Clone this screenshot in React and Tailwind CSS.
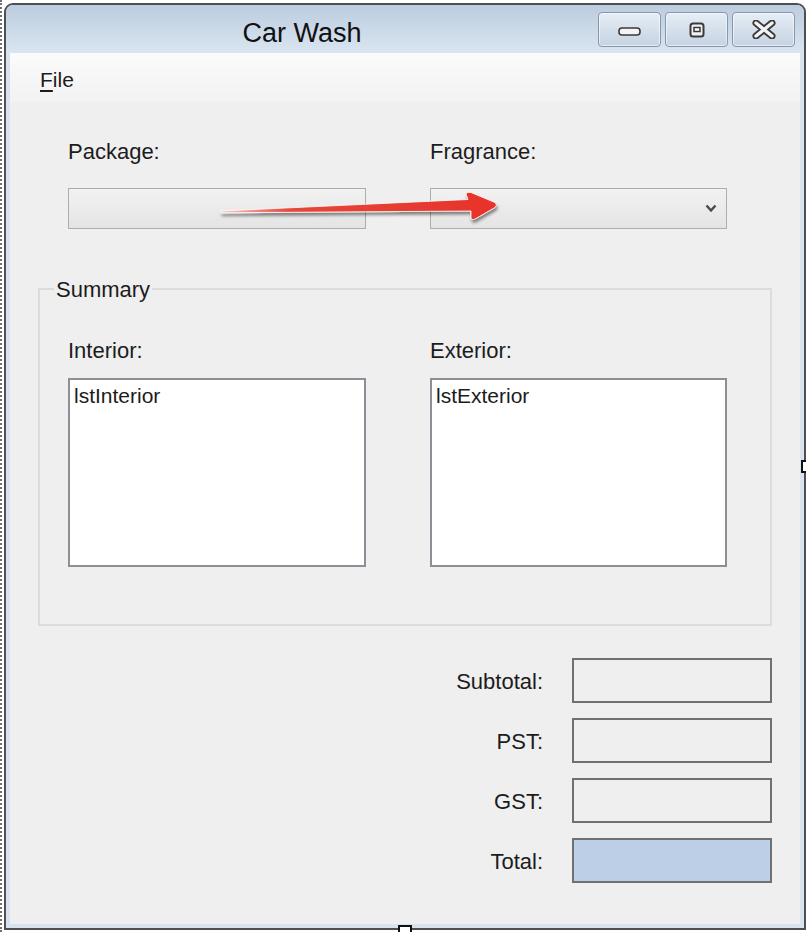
import React from 'react';

const TitleButton = ({ children }) => (
  <div className="w-[63px] h-[35px] rounded-[4px] border border-[#8796aa] bg-gradient-to-b from-[#e6edf5] to-[#c6d3e2] shadow-[inset_0_0_0_1px_rgba(255,255,255,0.55)] flex items-center justify-center">
    {children}
  </div>
);

const TotalRow = ({ label, total }) => (
  <div className="flex items-center gap-[29px]">
    <span className="text-[22px] leading-[26px] pt-[2px]">{label}</span>
    <div
      className={`w-[200px] h-[45px] border-2 border-[#707070] ${
        total ? 'bg-[#bccfe6]' : 'bg-[#efefef]'
      }`}
    />
  </div>
);

export default function App() {
  return (
    <div className="relative w-[806px] h-[932px] overflow-hidden bg-white border-l-2 border-dotted border-[#707070] font-['Liberation_Sans',Arial,sans-serif] text-[#1c1c1c]">
      <div className="ml-[2px] mt-[3px] w-[802px] h-[927px] border-2 border-[#4f4f4f] rounded-t-[9px] bg-[#d8e3ef] flex flex-col overflow-hidden">
        {/* title bar */}
        <div className="h-[48px] flex bg-gradient-to-b from-[#bccddf] to-[#d9e5f1]">
          <div className="flex-1 text-center text-[27px] leading-[32px] pt-[12px] text-[#111]">Car Wash</div>
          <div className="flex gap-[4px] pt-[7px] pr-[9px]">
            <TitleButton>
              <svg width="23" height="9" viewBox="0 0 23 9" className="mt-[4px]">
                <rect x="1" y="1" width="21" height="7" rx="3" fill="#f4f4f4" stroke="#3a3a3a" strokeWidth="1.6" />
              </svg>
            </TitleButton>
            <TitleButton>
              <svg width="16" height="16" viewBox="0 0 16 16">
                <rect x="1.5" y="1.5" width="13" height="13" rx="2.5" fill="#f2f2f2" stroke="#3a3a3a" strokeWidth="2" />
                <rect x="5" y="5.5" width="6" height="4" fill="#fff" stroke="#3a3a3a" strokeWidth="1.5" />
              </svg>
            </TitleButton>
            <TitleButton>
              <svg width="24" height="19" viewBox="0 0 24 19">
                <path d="M4 3 L20 16 M20 3 L4 16" stroke="#3a3a3a" strokeWidth="7" strokeLinecap="round" />
                <path d="M4 3 L20 16 M20 3 L4 16" stroke="#f3f3f3" strokeWidth="3.4" strokeLinecap="round" />
              </svg>
            </TitleButton>
          </div>
        </div>

        {/* menu bar */}
        <div className="mx-[4px] h-[49px] bg-gradient-to-b from-[#fbfbfb] to-[#f2f2f2] pl-[30px] pt-[14px]">
          <span className="text-[21px] leading-[26px]">
            <span className="underline underline-offset-[3px]">F</span>ile
          </span>
        </div>

        {/* client area */}
        <div className="mx-[4px] mb-[4px] flex-1 bg-[#efefef]">
          <div className="flex gap-[64px] pl-[58px] pt-[37px]">
            <div className="w-[298px]">
              <div className="text-[22px] leading-[26px]">Package:</div>
              <div className="mt-[23px] h-[41px] border border-[#adadad] bg-gradient-to-b from-[#f2f2f2] to-[#e4e4e4]" />
            </div>
            <div className="w-[297px]">
              <div className="text-[22px] leading-[26px]">Fragrance:</div>
              <div className="mt-[23px] h-[41px] border border-[#adadad] bg-gradient-to-b from-[#f2f2f2] to-[#e4e4e4] flex items-center justify-end pr-[9px]">
                <svg width="12" height="9" viewBox="0 0 12 9">
                  <path d="M1.5 1.5 L6 6.5 L10.5 1.5" fill="none" stroke="#4a4a4a" strokeWidth="2.4" />
                </svg>
              </div>
            </div>
          </div>

          {/* summary group */}
          <div className="relative mt-[59px] ml-[28px] w-[734px] h-[338px] border-2 border-[#dcdcdc]">
            <span className="absolute -top-[13px] left-[14px] px-[2px] bg-[#efefef] text-[22px] leading-[26px]">Summary</span>
            <div className="flex gap-[64px] pl-[28px] pt-[48px]">
              <div className="w-[298px]">
                <div className="text-[22px] leading-[26px]">Interior:</div>
                <div className="mt-[14px] h-[189px] border-2 border-[#8b9096] bg-white pl-[4px] pt-[4px] text-[21px] leading-[24px]">lstInterior</div>
              </div>
              <div className="w-[297px]">
                <div className="text-[22px] leading-[26px]">Exterior:</div>
                <div className="mt-[14px] h-[189px] border-2 border-[#8b9096] bg-white pl-[4px] pt-[4px] text-[21px] leading-[24px]">lstExterior</div>
              </div>
            </div>
          </div>

          {/* totals */}
          <div className="mt-[32px] ml-[28px] w-[734px] flex flex-col items-end gap-[15px]">
            <TotalRow label="Subtotal:" />
            <TotalRow label="PST:" />
            <TotalRow label="GST:" />
            <TotalRow label="Total:" total />
          </div>
        </div>
      </div>

      {/* designer resize handles */}
      <div className="absolute left-[799px] top-[460px] w-[12px] h-[13px] bg-white border-2 border-[#111]" />
      <div className="absolute left-[396px] top-[925px] w-[14px] h-[12px] bg-white border-2 border-[#111]" />

      {/* annotation arrow */}
      <svg className="absolute inset-0 pointer-events-none" width="806" height="932" viewBox="0 0 806 932">
        <defs>
          <linearGradient id="arrowFill" x1="219" y1="0" x2="494" y2="0" gradientUnits="userSpaceOnUse">
            <stop offset="0" stopColor="#f6c8c2" />
            <stop offset="0.25" stopColor="#e4473b" />
            <stop offset="1" stopColor="#e8322a" />
          </linearGradient>
          <filter id="arrowShadow" x="-10%" y="-50%" width="120%" height="200%">
            <feDropShadow dx="1" dy="3" stdDeviation="1.6" floodColor="#000" floodOpacity="0.45" />
          </filter>
        </defs>
        <path
          d="M219 211 L466 199.5 L464 194 Q465 191.5 469 192.5 L493 202.5 Q496 205 493 207.5 L473 219 Q469.5 220.5 469 217.5 L469 211 L219 212.8 Z"
          fill="url(#arrowFill)"
          stroke="#fff"
          strokeWidth="1"
          strokeOpacity="0.8"
          filter="url(#arrowShadow)"
        />
      </svg>
    </div>
  );
}
